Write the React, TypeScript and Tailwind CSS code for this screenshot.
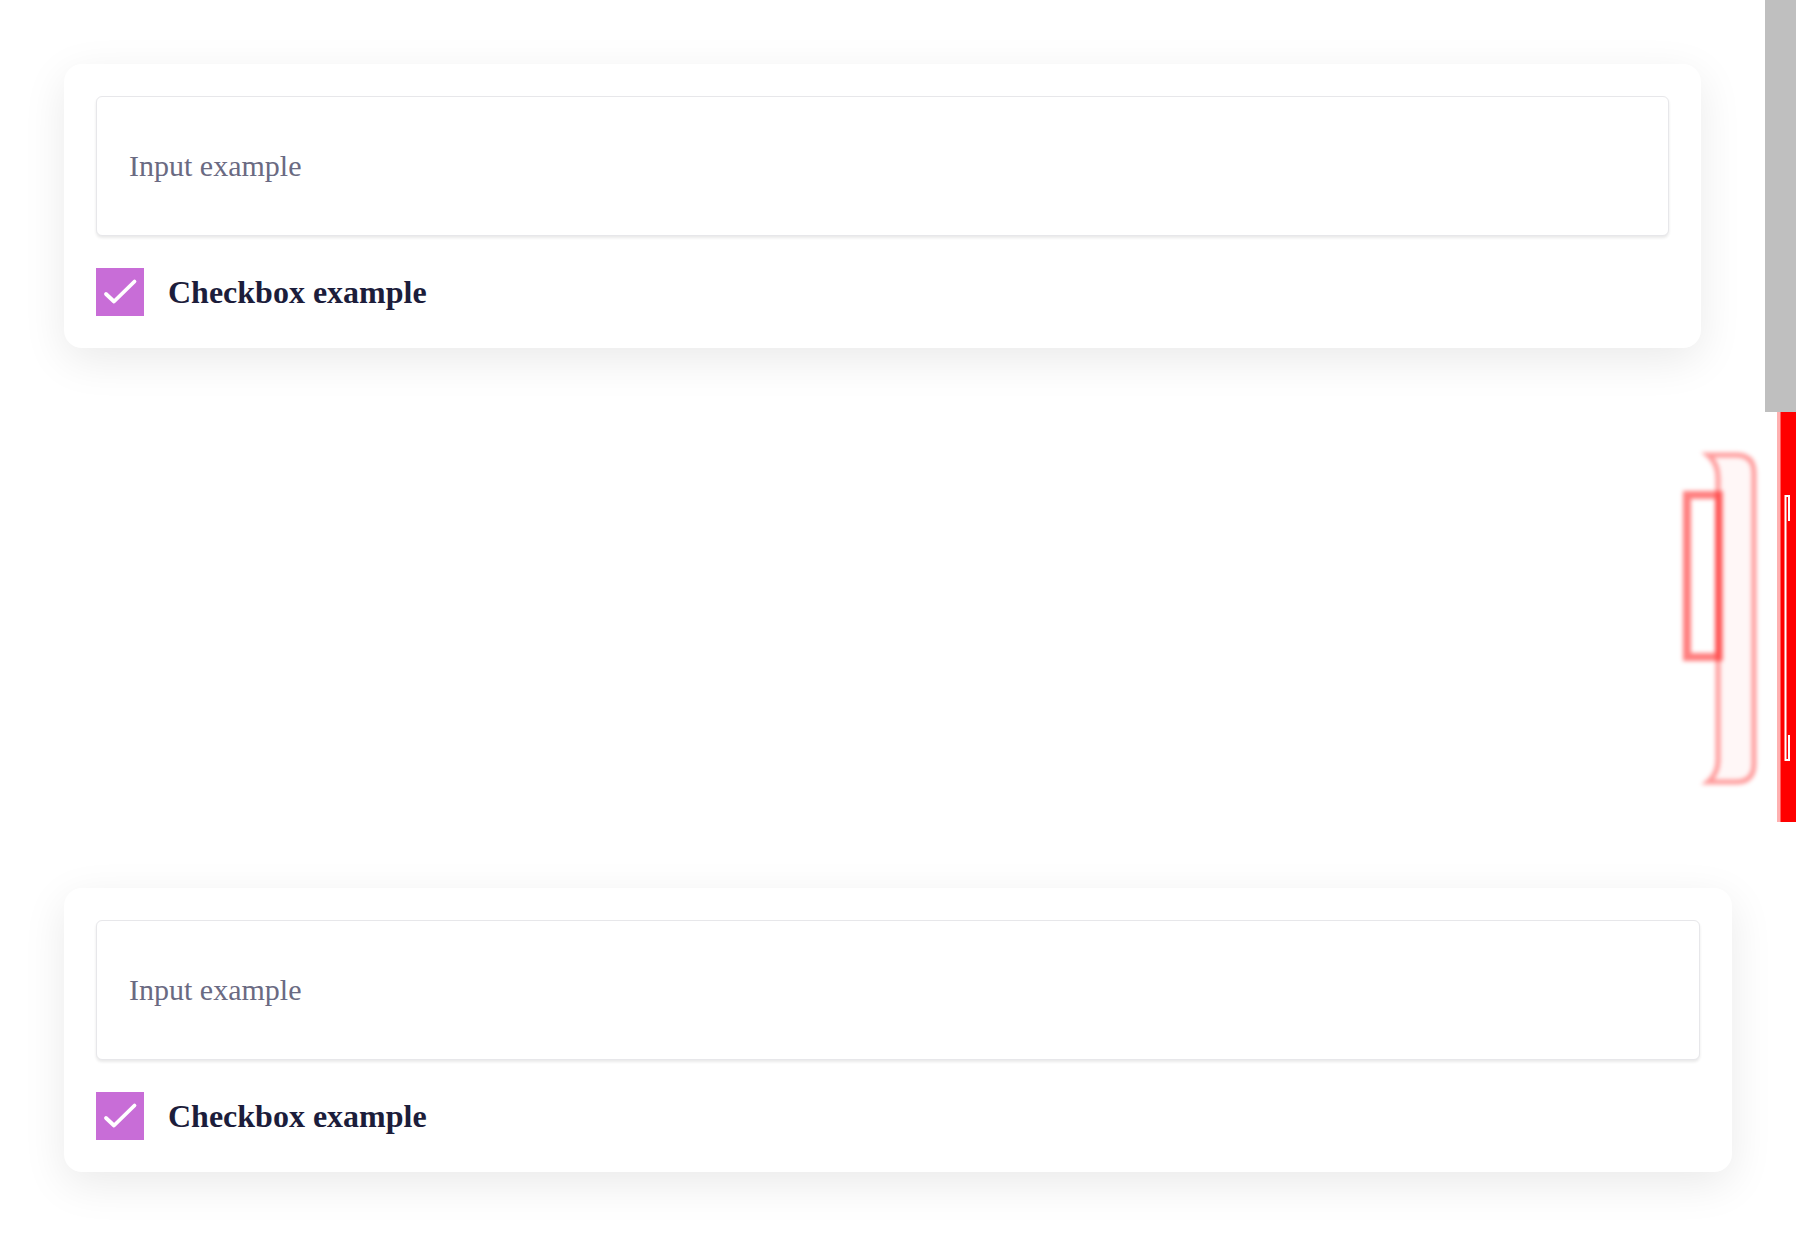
import { useState } from 'react';

function FormCard() {
  const [checked, setChecked] = useState(true);

  return (
    <div className="rounded-[18px] bg-white px-8 py-8 shadow-[0_12px_44px_rgba(0,0,0,0.085)]">
      <input
        type="text"
        placeholder="Input example"
        className="block h-[140px] w-full rounded-md border border-[#e7e7ea] bg-white px-8 font-['Liberation_Serif',serif] text-[30px] text-[#1c1d3b] shadow-[0_2px_3px_rgba(0,0,0,0.09)] outline-none placeholder:text-[#6a6a82]"
      />
      <label className="mt-8 flex cursor-pointer items-center">
        <button
          type="button"
          onClick={() => setChecked(!checked)}
          className="flex h-12 w-12 items-center justify-center bg-[#c86dd7]"
        >
          {checked && (
            <svg width="48" height="48" viewBox="0 0 48 48" fill="none">
              <path
                d="M10 26 L18 33.5 L38.5 13.5"
                stroke="white"
                strokeWidth="3.8"
                strokeLinecap="round"
                strokeLinejoin="round"
              />
            </svg>
          )}
        </button>
        <span className="ml-6 font-['Liberation_Serif',serif] text-[32px] font-bold text-[#1c1d3b]">
          Checkbox example
        </span>
      </label>
    </div>
  );
}

// faded red artefact + red strip in the gap between the two captures
function RedStrip() {
  return (
    <div className="relative flex w-[19px]">
      <div className="w-[3px] bg-[#ffb0b0]" />
      <div className="w-[1px] bg-[#ff5c5c]" />
      <div className="flex-1 bg-[#ff0000]" />
      <svg
        className="absolute left-[7px] top-[83px]"
        width="6"
        height="266"
        viewBox="0 0 6 266"
        fill="none"
      >
        <path d="M5 1 H1.5 V265 H5" stroke="white" strokeWidth="2" />
        <path d="M2 1 H5 V26" stroke="white" strokeWidth="2" />
        <path d="M2 265 H5 V240" stroke="white" strokeWidth="2" />
      </svg>
    </div>
  );
}

function Ghost() {
  return (
    <svg
      width="86"
      height="340"
      viewBox="0 0 86 340"
      fill="none"
      className="blur-[2px]"
    >
      <path
        d="M32 7 C38 12 42 20 42 30 L42 312 C42 322 38 329 32 334 L60 334 Q78 334 78 316 L78 25 Q78 7 60 7 Z"
        fill="rgba(255,0,0,0.03)"
        stroke="rgba(255,0,0,0.38)"
        strokeWidth="5"
      />
      <rect
        x="11"
        y="47"
        width="32"
        height="162"
        stroke="rgba(255,0,0,0.5)"
        strokeWidth="8"
      />
    </svg>
  );
}

export default function App() {
  return (
    <div className="flex w-[1796px] flex-col bg-white">
      {/* first capture with scrollbar */}
      <div className="flex h-[412px]">
        <div className="flex-1 rounded-b-2xl bg-white px-16 pt-16">
          <FormCard />
        </div>
        <div className="w-[31px] bg-[#bfbfbf]" />
      </div>

      {/* gap */}
      <div className="flex h-[410px]">
        <div className="flex flex-1 justify-end pr-[15px] pt-[36px]">
          <Ghost />
        </div>
        <RedStrip />
      </div>

      {/* second capture */}
      <div className="h-[414px] rounded-b-2xl bg-white px-16 pt-[66px]">
        <FormCard />
      </div>
    </div>
  );
}
